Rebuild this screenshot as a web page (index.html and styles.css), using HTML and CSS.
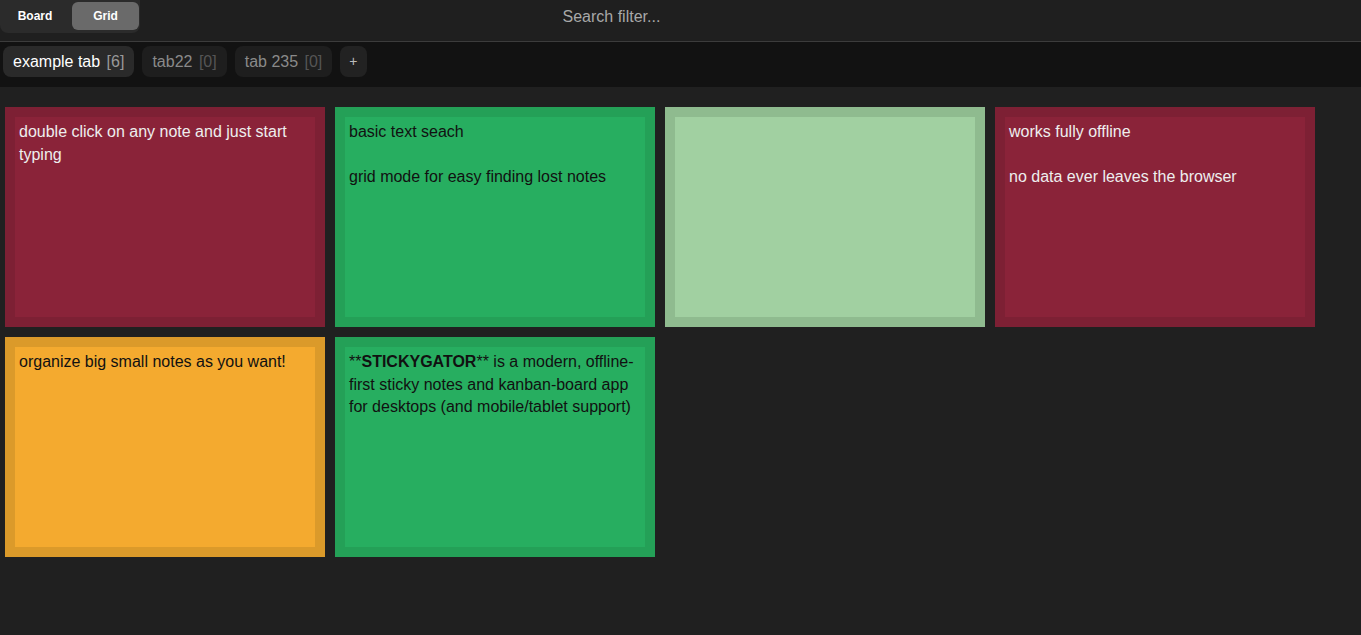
FILE: index.html
```html
<!DOCTYPE html>
<html>
<head>
<meta charset="utf-8">
<link rel="stylesheet" href="styles.css">
</head>
<body>
<header class="topbar">
  <div class="toggle">
    <button class="mode">Board</button>
    <button class="mode active">Grid</button>
  </div>
  <input class="search" type="text" placeholder="Search filter...">
  <div></div>
</header>
<nav class="tabs">
  <div class="tab active">example tab <span class="count">[6]</span></div>
  <div class="tab">tab22 <span class="count">[0]</span></div>
  <div class="tab">tab 235 <span class="count">[0]</span></div>
  <div class="tab add">+</div>
</nav>
<main class="grid">
  <div class="note red"><div class="body">double click on any note and just start typing</div></div>
  <div class="note green"><div class="body">basic text seach

grid mode for easy finding lost notes</div></div>
  <div class="note lightgreen"><div class="body"></div></div>
  <div class="note red"><div class="body">works fully offline

no data ever leaves the browser</div></div>
  <div class="note orange"><div class="body">organize big small notes as you want!</div></div>
  <div class="note green"><div class="body">**<b>STICKYGATOR</b>** is a modern, offline-first sticky notes and kanban-board app for desktops (and mobile/tablet support)</div></div>
</main>
</body>
</html>
```
FILE: styles.css
```css
* { box-sizing: border-box; }
html, body {
  margin: 0;
  height: 100%;
  background: #202020;
  font-family: "Liberation Sans", Arial, sans-serif;
}
.topbar {
  height: 42px;
  background: #1f1f1f;
  border-bottom: 1px solid #3c3c3c;
  display: grid;
  grid-template-columns: 1fr 250px 1fr;
  align-items: start;
}
.toggle {
  width: 140px;
  height: 33px;
  background: #2b2b2b;
  border-radius: 0 0 8px 8px;
  display: flex;
  align-items: center;
  padding: 0 1px 0 0;
  justify-self: start;
}
.mode {
  border: 0;
  background: transparent;
  color: #fff;
  font-family: "Liberation Sans", Arial, sans-serif;
  font-weight: bold;
  font-size: 12px;
  height: 28px;
  border-radius: 6px;
  width: 70px;
  padding: 0;
  margin-top: -1px;
}
.mode.active {
  width: 67px;
  margin-left: 2px;
  background: #6a6a6a;
}
.search {
  background: transparent;
  border: 0;
  outline: none;
  color: #ddd;
  font-family: "Liberation Sans", Arial, sans-serif;
  font-size: 16px;
  height: 33px;
  padding: 0 7px;
  width: 250px;
}
.search::placeholder { color: #a8a8a8; }
.tabs {
  height: 45px;
  background: #121212;
  display: flex;
  align-items: flex-start;
  gap: 8px;
  padding: 4px 3px 0 3px;
}
.tab {
  height: 31px;
  line-height: 31px;
  padding: 0 10px;
  border-radius: 8px;
  background: #1e1e1e;
  color: #8a8a8a;
  font-size: 16px;
  white-space: nowrap;
}
.tab .count { color: #555; margin-left: 2px; }
.tab.active { background: #2a2a2a; color: #fff; }
.tab.active .count { color: #999; }
.tab.add { font-size: 14px; color: #bbb; padding: 0 9px; background: #222; }
.grid {
  display: grid;
  grid-template-columns: repeat(4, 320px);
  grid-auto-rows: 220px;
  gap: 10px;
  padding: 20px 5px;
}
.note {
  border: 10px solid;
}
.note .body {
  height: 100%;
  padding: 4px 4px;
  font-size: 16px;
  line-height: 22.6px;
  white-space: pre-wrap;
  color: #111;
}
.red { border-color: #7d2034; }
.red .body { background: #8a2339; color: #eee; }
.green { border-color: #24a057; }
.green .body { background: #27ae60; }
.lightgreen { border-color: #8fbb8f; }
.lightgreen .body { background: #a1d0a1; }
.orange { border-color: #db9a2a; }
.orange .body { background: #f4aa2f; }
```
